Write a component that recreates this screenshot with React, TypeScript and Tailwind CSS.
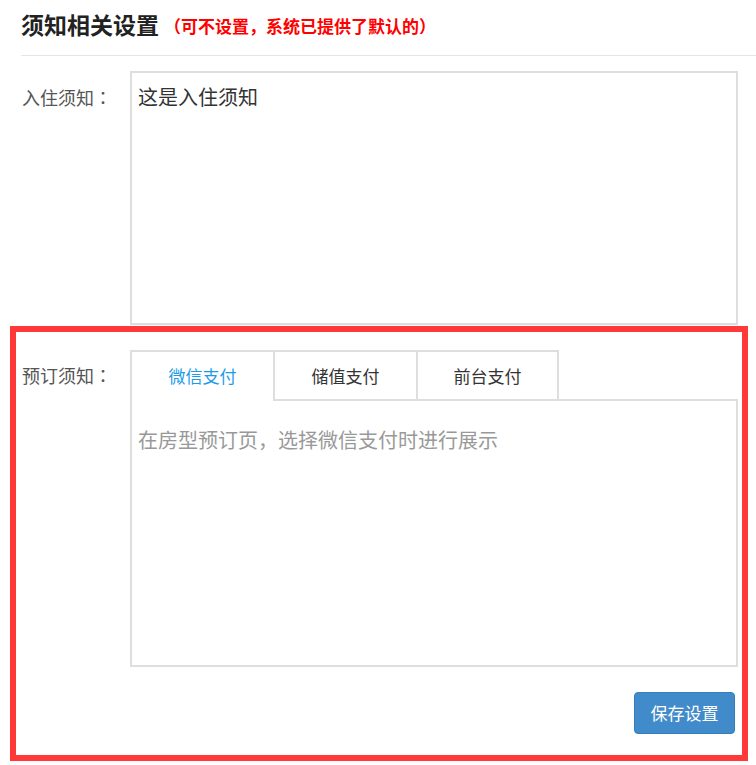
import React from "react";

const font = { fontFamily: '"Noto Sans CJK SC", "Noto Sans", sans-serif' };
const tcFont = { fontFamily: '"Noto Sans CJK TC", "Noto Sans CJK SC", sans-serif' };

function Colon() {
  return <span style={tcFont}>：</span>;
}

export default function App() {
  const tabs = ["微信支付", "储值支付", "前台支付"];
  return (
    <div className="w-[756px] h-[765px] bg-white overflow-hidden" style={font}>
      {/* Header */}
      <div className="ml-[21px] h-[56px] border-b border-[#e6e6e6] flex items-start pt-[11px]">
        <span className="text-[23px] leading-[26px] font-bold text-[#222]">须知相关设置</span>
        <span className="ml-[5px] mt-[2px] text-[17px] leading-[26px] font-bold text-[#ff0000]">
          （可不设置，系统已提供了默认的）
        </span>
      </div>

      {/* Row 1 */}
      <div className="flex mt-[15px] pl-[22px]">
        <div className="w-[108px] pt-[14px] text-[18px] leading-[24px] text-[#555]">
          入住须知<Colon />
        </div>
        <div className="w-[608px] h-[254px] border-2 border-[#dedede] pl-[6px] pt-[12px] text-[20px] leading-[24px] text-[#333]">
          这是入住须知
        </div>
      </div>

      {/* Row 2, annotated */}
      <div className="ml-[10px] mt-[1px] w-[738px] h-[435px] border-[6px] border-[#ff3838] pl-[6px] pt-[18px]">
        <div className="flex">
          <div className="w-[108px] pt-[13px] text-[18px] leading-[24px] text-[#555]">
            预订须知<Colon />
          </div>
          <div className="w-[608px] flex flex-col">
            <div className="flex items-start h-[49px]">
              {tabs.map((t, i) => (
                <div
                  key={t}
                  className={
                    (i === 0
                      ? "h-[51px] relative z-10 text-[#1c9be6] pb-[2px] "
                      : "h-[49px] text-[#333] ") +
                    (i === 2 ? "border-r-2 " : "") +
                    "w-[143px] bg-white border-t-2 border-l-2 border-[#dedede] flex items-center justify-center text-[17px] leading-[24px]"
                  }
                >
                  {t}
                </div>
              ))}
            </div>
            <div className="h-[268px] border-2 border-[#dedede] pl-[6px] pt-[27px] text-[20px] leading-[24px] text-[#999]">
              在房型预订页，选择微信支付时进行展示
            </div>
            <div className="flex justify-end pr-[3px] mt-[25px]">
              <button className="w-[101px] h-[42px] rounded-[4px] bg-[#428bca] border border-[#357ebd] text-white text-[17px] leading-[24px]">
                保存设置
              </button>
            </div>
          </div>
        </div>
      </div>
    </div>
  );
}
